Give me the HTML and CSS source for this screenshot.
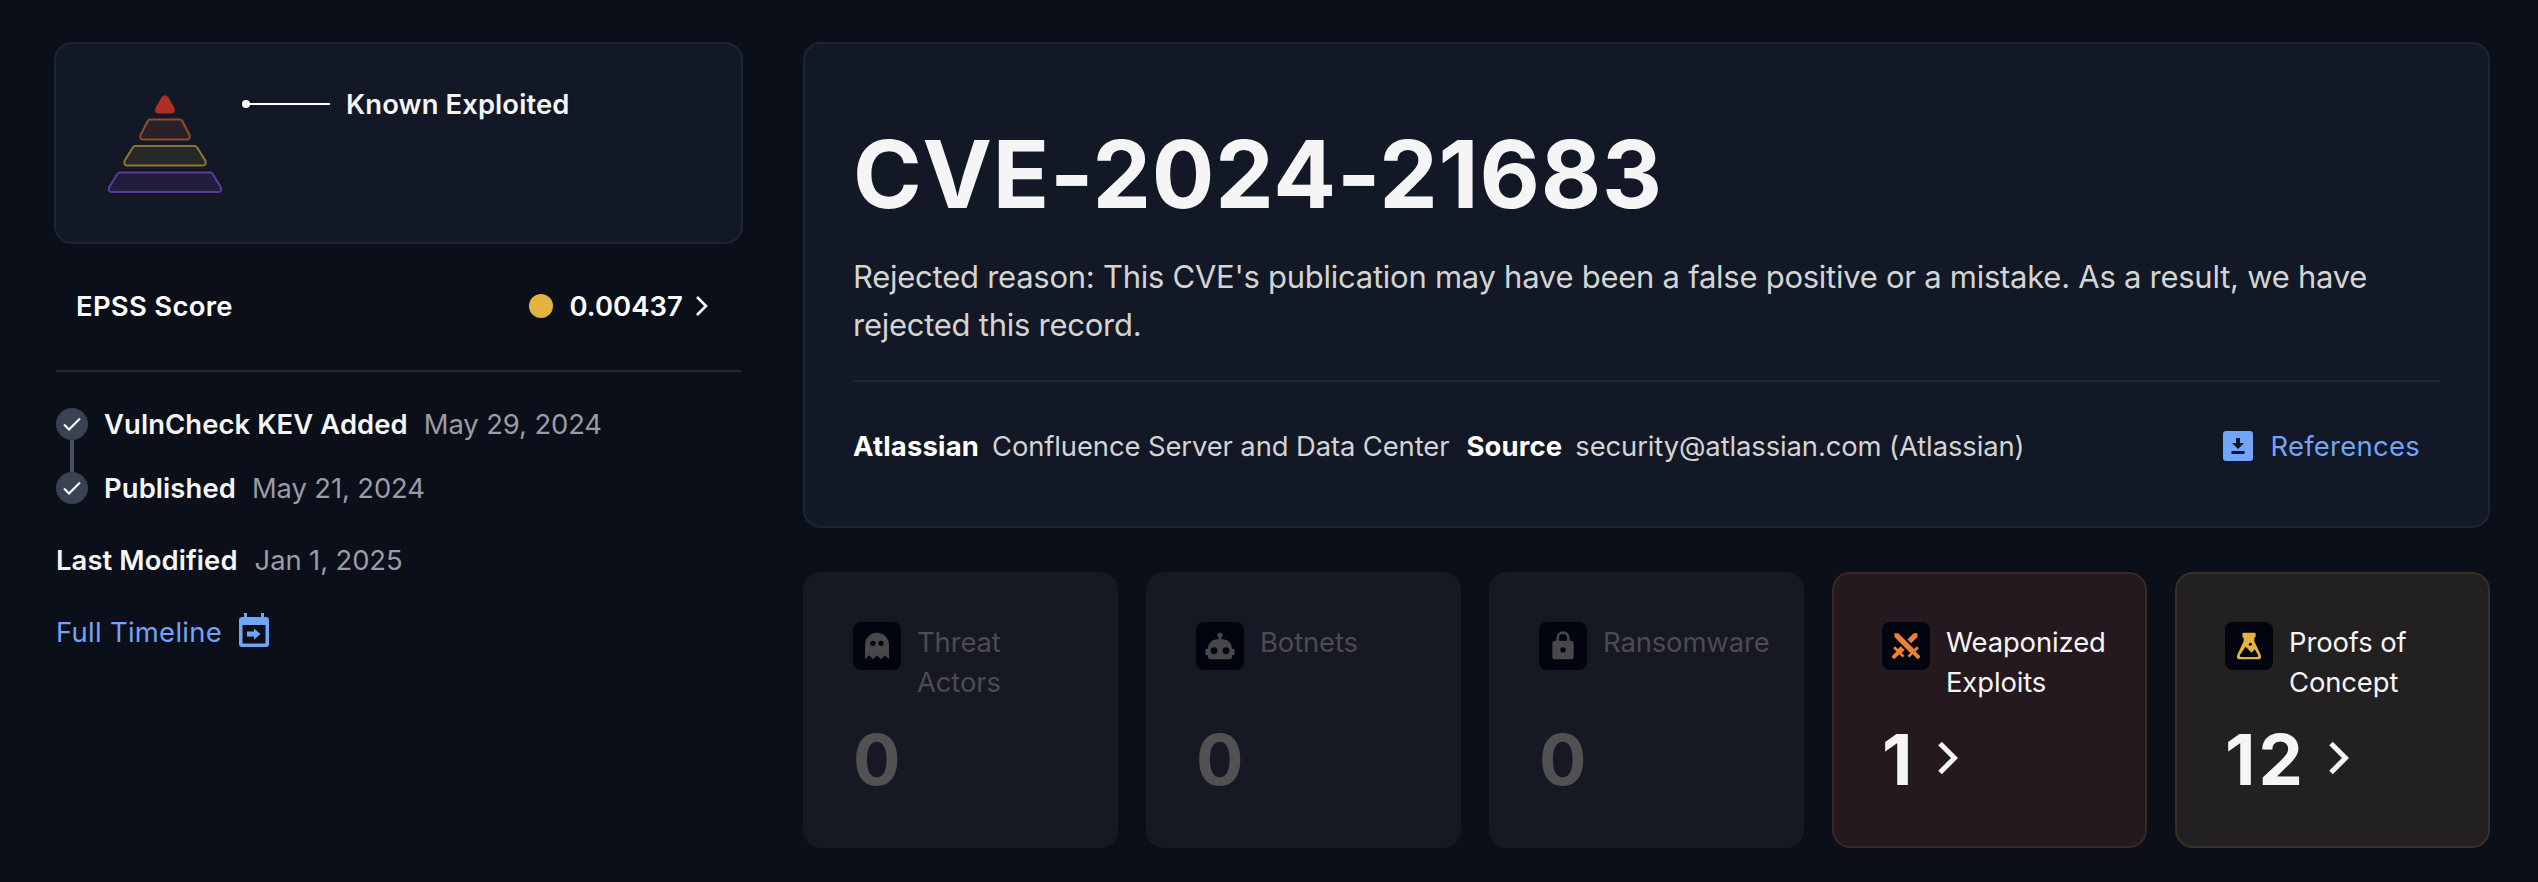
FILE: index.html
```html
<!DOCTYPE html>
<html lang="en">
<head>
    <meta charset="UTF-8">
    <meta name="viewport" content="width=device-width, initial-scale=1.0">
    <title>CVE-2024-21683</title>
    <link rel="stylesheet" href="styles.css">
</head>
<body>

    <div class="page">
        <aside class="sidebar">
            <div class="panel pyramid-card">
                <svg class="pyramid" width="118" height="100" viewBox="0 0 118 100">
                    <path fill="#b02e26" d="M55.5 2.500Q59 -2 62.500 2.500L68.500 13Q70 18.500 65 18.500H53Q48 18.500 49.500 13Z"/>
                    <path fill="#2a2128" stroke="#8f4f2e" stroke-width="2" d="M44 24.500H74Q75.500 24.500 76.500 26.500L83.500 40Q84.500 44.500 81 44.500H37Q33.500 44.500 34.500 40L41.500 26.500Q42.500 24.500 44 24.500Z"/>
                    <path fill="#272928" stroke="#8d7430" stroke-width="2" d="M29 51H89Q90.500 51 91.500 53L99.500 66Q100.500 70.500 97 70.500H21Q17.500 70.500 18.500 66L26.500 53Q27.500 51 29 51Z"/>
                    <path fill="#201e3a" stroke="#5e3b98" stroke-width="2" d="M13.500 77.500H104.500Q106 77.500 107 79.500L115 92.500Q116 97 112.500 97H5.500Q2 97 3 92.500L11 79.500Q12 77.500 13.500 77.500Z"/>
                </svg>
                <div class="pyramid-label">
                    <svg width="88" height="8" viewBox="0 0 88 8">
                        <circle cx="4" cy="4" r="4" fill="#fff"/>
                        <path d="M4 4H88" stroke="#fff" stroke-width="2"/>
                    </svg>
                    <span>Known Exploited</span>
                </div>
            </div>

            <div class="epss">
                <span class="epss-name">EPSS Score</span>
                <span class="dot"></span>
                <span class="epss-value">0.00437</span>
                <svg class="epss-arrow" width="14" height="22" viewBox="0 0 14 22" fill="none" stroke="#fff" stroke-width="2.600">
                    <path d="M2 2L11 11L2 20"/>
                </svg>
            </div>

            <ul class="timeline">
                <li>
                    <span class="check"><svg width="20" height="16" viewBox="0 0 20 16" fill="none" stroke="#f5f5f5" stroke-width="2.200"><path d="M2 8.500L7 13.500L18 2.500"/></svg></span>
                    <b>VulnCheck KEV Added</b>
                    <span class="date">May 29, 2024</span>
                </li>
                <li>
                    <span class="check"><svg width="20" height="16" viewBox="0 0 20 16" fill="none" stroke="#f5f5f5" stroke-width="2.200"><path d="M2 8.500L7 13.500L18 2.500"/></svg></span>
                    <b>Published</b>
                    <span class="date">May 21, 2024</span>
                </li>
            </ul>

            <div class="modified">
                <b>Last Modified</b>
                <span class="date">Jan 1, 2025</span>
            </div>

            <a class="link full-timeline">
                <span>Full Timeline</span>
                <svg width="30" height="34" viewBox="0 0 30 34">
                    <path fill="#72a4f7" fill-rule="evenodd" d="M5 0H8V4H22V0H25V4H27Q30 4 30 7V31Q30 34 27 34H3Q0 34 0 31V7Q0 4 3 4H5ZM3.500 12V30.500H26.500V12Z"/>
                    <path fill="#72a4f7" d="M8 18.500H15V15.500L21.500 21L15 26.500V23.500H8Z"/>
                </svg>
            </a>
        </aside>

        <main class="content">
            <section class="panel summary">
                <h1>CVE-2024-21683</h1>
                <p class="description">Rejected reason: This CVE's publication may have been a false positive or a mistake. As a result, we have rejected this record.</p>
                <div class="meta">
                    <b>Atlassian</b>
                    <span class="product">Confluence Server and Data Center</span>
                    <b>Source</b>
                    <span>security@atlassian.com (Atlassian)</span>
                    <a class="link references">
                        <svg width="30" height="30" viewBox="0 0 30 30">
                            <rect width="30" height="30" rx="3" fill="#72a4f7"/>
                            <path fill="#121825" d="M13 7H17V12H21L15 18L9 12H13ZM8.500 20H21.500V23H8.500Z"/>
                        </svg>
                        <span>References</span>
                    </a>
                </div>
            </section>

            <section class="stats">
                <div class="stat">
                    <div class="stat-head">
                        <span class="tile">
                            <svg width="32" height="32" viewBox="0 0 24 24" fill="#484848"><path fill-rule="evenodd" d="M12 2C7 2 3 6 3 11V22L6 19L9 22L12 19L15 22L18 19L21 22V11C21 6 17 2 12 2ZM9 8A2 2 0 1 1 9 12A2 2 0 1 1 9 8ZM15 8A2 2 0 1 1 15 12A2 2 0 1 1 15 8Z"/></svg>
                        </span>
                        <span>Threat Actors</span>
                    </div>
                    <div class="count">0</div>
                </div>
                <div class="stat">
                    <div class="stat-head">
                        <span class="tile">
                            <svg width="32" height="32" viewBox="0 0 24 24" fill="#484848"><path fill-rule="evenodd" d="M22 14H21C21 10.130 17.870 7 14 7H13V5.730A2 2 0 1 0 11 5.730V7H10C6.130 7 3 10.130 3 14H2C1.450 14 1 14.450 1 15V18C1 18.550 1.450 19 2 19H3V20A2 2 0 0 0 5 22H19A2 2 0 0 0 21 20V19H22C22.550 19 23 18.550 23 18V15C23 14.450 22.550 14 22 14ZM7.500 18A2.500 2.500 0 1 1 7.500 13A2.500 2.500 0 0 1 7.500 18ZM16.500 18A2.500 2.500 0 1 1 16.500 13A2.500 2.500 0 0 1 16.500 18Z"/></svg>
                        </span>
                        <span>Botnets</span>
                    </div>
                    <div class="count">0</div>
                </div>
                <div class="stat">
                    <div class="stat-head">
                        <span class="tile">
                            <svg width="32" height="32" viewBox="0 0 24 24" fill="#484848"><path fill-rule="evenodd" d="M12 17A2 2 0 0 0 12 13A2 2 0 0 0 12 17ZM18 8A2 2 0 0 1 20 10V20A2 2 0 0 1 18 22H6A2 2 0 0 1 4 20V10A2 2 0 0 1 6 8H7V6A5 5 0 0 1 17 6V8ZM12 3A3 3 0 0 0 9 6V8H15V6A3 3 0 0 0 12 3Z"/></svg>
                        </span>
                        <span>Ransomware</span>
                    </div>
                    <div class="count">0</div>
                </div>
                <div class="stat weaponized">
                    <div class="stat-head">
                        <span class="tile">
                            <svg width="32" height="32" viewBox="0 0 24 24" fill="#ee7f35"><path d="M6.200 2.440L18.100 14.340L20.220 12.220L21.630 13.630L19.160 16.100L22.340 19.280C22.730 19.670 22.730 20.300 22.340 20.690L21.630 21.400C21.240 21.790 20.610 21.790 20.220 21.400L17 18.230L14.560 20.700L13.150 19.290L15.270 17.170L3.370 5.270V2.440H6.200ZM15.890 10L20.630 5.260V2.440H17.800L13.060 7.180L15.890 10ZM10.940 15L8.110 12.130L5.900 14.340L3.780 12.220L2.370 13.630L4.840 16.100L1.660 19.290C1.270 19.680 1.270 20.310 1.660 20.700L2.370 21.410C2.760 21.800 3.390 21.800 3.780 21.410L7 18.230L9.440 20.700L10.850 19.290L8.730 17.170L10.940 15Z"/></svg>
                        </span>
                        <span>Weaponized Exploits</span>
                    </div>
                    <div class="count">1
                        <svg width="20" height="34" viewBox="0 0 20 34" fill="none" stroke="#f5f5f5" stroke-width="5"><path d="M2 2.500L16.500 17L2 31.500"/></svg>
                    </div>
                </div>
                <div class="stat poc">
                    <div class="stat-head">
                        <span class="tile">
                            <svg width="32" height="32" viewBox="0 0 24 24" fill="#e3b341"><path fill-rule="evenodd" d="M8 2H16Q17 2 17 3V4.500Q17 5.500 16 6V8.500L20.700 18.300Q22 22 18.500 22H5.500Q2 22 3.300 18.300L8 8.500V6Q7 5.500 7 4.500V3Q7 2 8 2ZM5.200 18.800Q4.700 20.200 6 20.200H18Q19.300 20.200 18.800 18.800L16.300 14.500L14 17L9.500 12.500ZM13 9.500A1.200 1.200 0 1 0 13 11.900A1.200 1.200 0 1 0 13 9.500Z"/></svg>
                        </span>
                        <span>Proofs of Concept</span>
                    </div>
                    <div class="count">12
                        <svg width="20" height="34" viewBox="0 0 20 34" fill="none" stroke="#f5f5f5" stroke-width="5"><path d="M2 2.500L16.500 17L2 31.500"/></svg>
                    </div>
                </div>
            </section>
        </main>
    </div>

</body>
</html>
```
FILE: styles.css
```css
* {
    box-sizing: border-box;
}

body {
    margin: 0;
    background-color: #0b0f1a;
    color: #f5f5f5;
    font-family: Inter, sans-serif;
    font-size: 27.4px;
    line-height: 40px;
    letter-spacing: -0.1px;
}

svg {
    display: block;
    flex-shrink: 0;
}

b {
    font-weight: 600;
    letter-spacing: 0.1px;
}

.page {
    display: flex;
    gap: 60px;
    height: 882px;
    padding: 42px 48px 0 54px;
}

.panel {
    background-color: #121825;
    border: 2px solid #1f2633;
    border-radius: 18px;
}

.sidebar {
    width: 689px;
    flex-shrink: 0;
}

.pyramid-card {
    display: flex;
    height: 202px;
    padding: 51px 0 0 50px;
}

.pyramid-label {
    display: flex;
    align-items: center;
    gap: 16px;
    height: 40px;
    margin: -11px 0 0 18px;
    font-weight: 600;
    letter-spacing: 0.1px;
}

.epss {
    display: flex;
    align-items: center;
    height: 128px;
    margin: 0 2px;
    padding: 0 32px 2px 20px;
    border-bottom: 2px solid #232936;
    color: #fff;
    font-weight: 600;
    letter-spacing: 0.1px;
}

.epss-name {
    flex: 1;
    letter-spacing: 0.3px;
}

.dot {
    width: 24px;
    height: 24px;
    margin-right: 16px;
    border-radius: 50%;
    background-color: #e3b341;
}

.epss-arrow {
    margin-left: 12px;
}

.timeline {
    list-style: none;
    margin: 32px 0 0 2px;
    padding: 0;
}

.timeline li {
    display: flex;
    align-items: center;
    gap: 16px;
    height: 40px;
    margin-bottom: 24px;
}

.check {
    position: relative;
    display: flex;
    align-items: center;
    justify-content: center;
    width: 32px;
    height: 32px;
    border-radius: 50%;
    background-color: #3a4150;
}

/* connector between two timeline entries */
.timeline li:first-child .check::after {
    content: "";
    position: absolute;
    top: 32px;
    left: 14px;
    width: 4px;
    height: 32px;
    background-color: #4b5160;
}

.date {
    color: #9a9ca6;
}

.modified {
    display: flex;
    gap: 17px;
    margin: 32px 0 0 2px;
}

.link {
    display: flex;
    align-items: center;
    color: #72a4f7;
    letter-spacing: 0.3px;
}

.full-timeline {
    gap: 17px;
    margin: 32px 0 0 2px;
}

.full-timeline svg {
    margin-bottom: 4px;
}

.content {
    flex: 1;
}

.summary {
    height: 486px;
    padding: 82px 48px 0;
}

h1 {
    margin: 0;
    font-size: 93px;
    font-weight: 700;
    line-height: 96px;
    letter-spacing: 0.8px;
}

.description {
    margin: 31px 0 0;
    color: #d4d4d4;
    font-size: 31px;
    line-height: 48px;
    letter-spacing: -0.26px;
}

.meta {
    display: flex;
    align-items: center;
    gap: 13px;
    margin-top: 31px;
    padding: 44px 20px 0 0;
    border-top: 2px solid #1f2633;
    color: #d4d4d4;
}

.meta b {
    color: #fff;
    font-weight: 700;
    letter-spacing: 0.2px;
}

.product {
    margin-right: 4px;
}

.references {
    gap: 17px;
    margin-left: auto;
}

.stats {
    display: grid;
    grid-template-columns: repeat(5, 1fr);
    gap: 28px;
    margin-top: 44px;
}

.stat {
    height: 276px;
    padding: 48px 30px 0 48px;
    border: 2px solid #171924;
    border-radius: 18px;
    background-color: #161823;
    color: #4c4c4d;
}

.stat-head {
    display: flex;
    gap: 16px;
    height: 80px;
}

.tile {
    display: flex;
    align-items: center;
    justify-content: center;
    flex-shrink: 0;
    width: 48px;
    height: 48px;
    border-radius: 8px;
    background-color: #02040f;
}

.count {
    display: flex;
    align-items: center;
    gap: 23px;
    margin-top: 22px;
    color: #515151;
    font-size: 70.5px;
    font-weight: 700;
    line-height: 72px;
    letter-spacing: 3px;
}

.count svg {
    margin-bottom: 4px;
}

.weaponized {
    background-color: #24191e;
    border-color: #3b2722;
    color: #f5f5f5;
}

.poc {
    background-color: #222021;
    border-color: #383021;
    color: #f5f5f5;
}

.weaponized .count,
.poc .count {
    color: #f5f5f5;
}
```
